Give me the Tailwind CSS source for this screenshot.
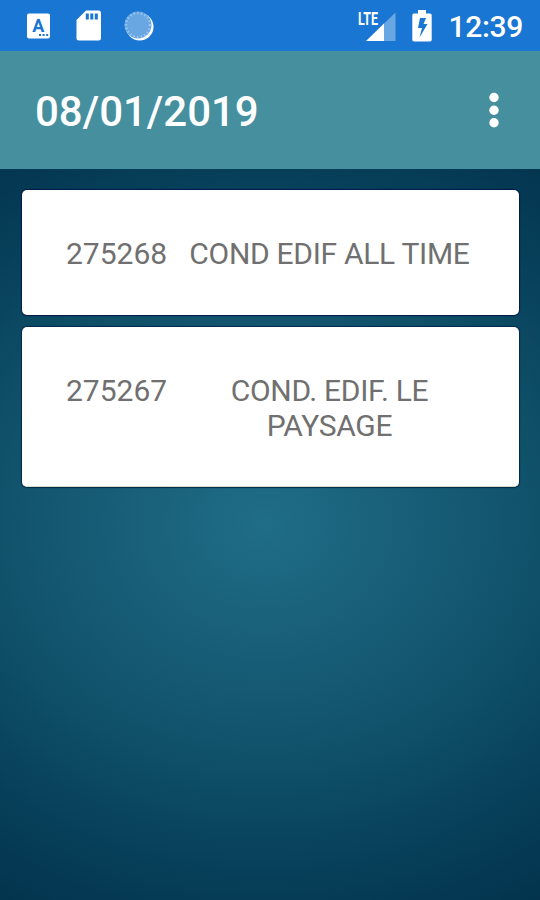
<!DOCTYPE html>
<html lang="pt-BR">
<head>
    <meta charset="UTF-8">
    <meta name="viewport" content="width=device-width, initial-scale=1.0">
    <title>08/01/2019</title>
    <script src="https://cdn.jsdelivr.net/npm/@tailwindcss/browser@4"></script>
</head>
<body class="w-[540px] h-[900px] overflow-hidden flex flex-col font-[Roboto,sans-serif] bg-[#02324a]">
    <!-- Status bar -->
    <div class="h-[51px] shrink-0 bg-[#1976d2] flex items-center justify-between pl-[26px] pr-[17px] text-white">
        <div class="flex items-center gap-[24px]">
            <svg class="w-[25px] h-[28px]" viewBox="0 0 25 28">
                <rect x="1" y="1.5" width="23" height="25" rx="2" fill="#fff"/>
                <text x="12.3" y="19.500" text-anchor="middle" font-family="Roboto" font-weight="700" font-size="18" fill="#1976d2">A</text>
                <path d="M13 22h2v2h-2zM16.6 22h2v2h-2zM20.2 22h2v2h-2z" fill="#1976d2"/>
            </svg>
            <svg class="w-[27px] h-[31px]" viewBox="0 0 27 31">
                <path d="M11 0.5h12.500a2.500 2.500 0 0 1 2.500 2.500v25a2.500 2.500 0 0 1-2.500 2.500H4a2.500 2.500 0 0 1-2.500-2.500V10z" fill="#fff"/>
                <path d="M10.800 3.500h3v6h-3zM15.300 3.500h3v6h-3zM19.800 3.500h3v6h-3z" fill="#1976d2"/>
            </svg>
            <svg class="w-[30px] h-[30px] -ml-0.5" viewBox="0 0 30 30">
                <circle cx="15.700" cy="15.700" r="13.800" fill="#fff"/>
                <circle cx="14" cy="14" r="13.500" fill="#69a7e3"/>
                <circle cx="14" cy="14" r="12" fill="none" stroke="#a3caef" stroke-width="2.500" stroke-dasharray="1.200 2.500"/>
            </svg>
        </div>
        <div class="flex items-center">
            <svg class="w-[40px] h-[32px] overflow-visible" viewBox="0 0 40 32">
                <path d="M38.500 2.500V31h-12V14z" fill="#69a7e3"/>
                <path d="M27 13.500V31H9z" fill="#fff"/>
                <text x="1" y="15" textLength="20" lengthAdjust="spacingAndGlyphs" font-family="Roboto" font-weight="700" font-size="18" fill="#fff">LTE</text>
            </svg>
            <svg class="w-[20px] h-[32px] ml-[15px]" viewBox="0 0 20 32">
                <path d="M6 0h8v3.500h4a1.700 1.700 0 0 1 1.700 1.700v24.600A1.700 1.700 0 0 1 18 31.500H2a1.700 1.700 0 0 1-1.700-1.700V5.200A1.700 1.700 0 0 1 2 3.500h4z" fill="#fff"/>
                <path d="M14 8H8L6 18h4L7.500 27.500 15.500 14h-4z" fill="#1976d2"/>
            </svg>
            <span class="ml-[16px] text-[30px] leading-none font-medium tracking-[-0.3px] relative top-px">12:39</span>
        </div>
    </div>

    <!-- App bar -->
    <div class="h-[118px] shrink-0 bg-[#458f9f] flex items-center justify-between pl-[35px] pr-[41px] text-white">
        <h1 class="text-[42px] leading-none font-medium pt-1">08/01/2019</h1>
        <svg class="w-[10px] h-[36px]" viewBox="0 0 10 36" fill="#fff">
            <circle cx="5" cy="5.500" r="4.700"/>
            <circle cx="5" cy="18.300" r="4.700"/>
            <circle cx="5" cy="30.800" r="4.700"/>
        </svg>
    </div>

    <!-- List -->
    <div class="flex-1 pl-[22px] pr-[21px] pt-[21px] flex flex-col gap-[12px] text-[30px] leading-[35px] text-[#707070] bg-[radial-gradient(550px_470px_at_265px_355px,#1f6d87_0%,#195f79_25%,#10516a_50%,#07405a_73%,#02304a_100%)]">
        <div class="h-[125px] rounded-[5px] bg-white shadow-[0_0_1px_1px_#02184a] flex pl-[44px] pr-[44px] pt-[46px]">
            <span class="w-[101px]">275268</span>
            <span class="flex-1 pl-[17px] text-center whitespace-nowrap tracking-[-0.3px]">COND EDIF ALL TIME</span>
        </div>
        <div class="h-[160px] rounded-[5px] bg-white border-b border-[#d5dcc0] shadow-[0_0_1px_1px_#02284a] flex pl-[44px] pr-[44px] pt-[46px]">
            <span class="w-[101px]">275267</span>
            <span class="flex-1 pl-[17px] text-center tracking-[-0.3px]">COND. EDIF. LE PAYSAGE</span>
        </div>
    </div>
</body>
</html>
